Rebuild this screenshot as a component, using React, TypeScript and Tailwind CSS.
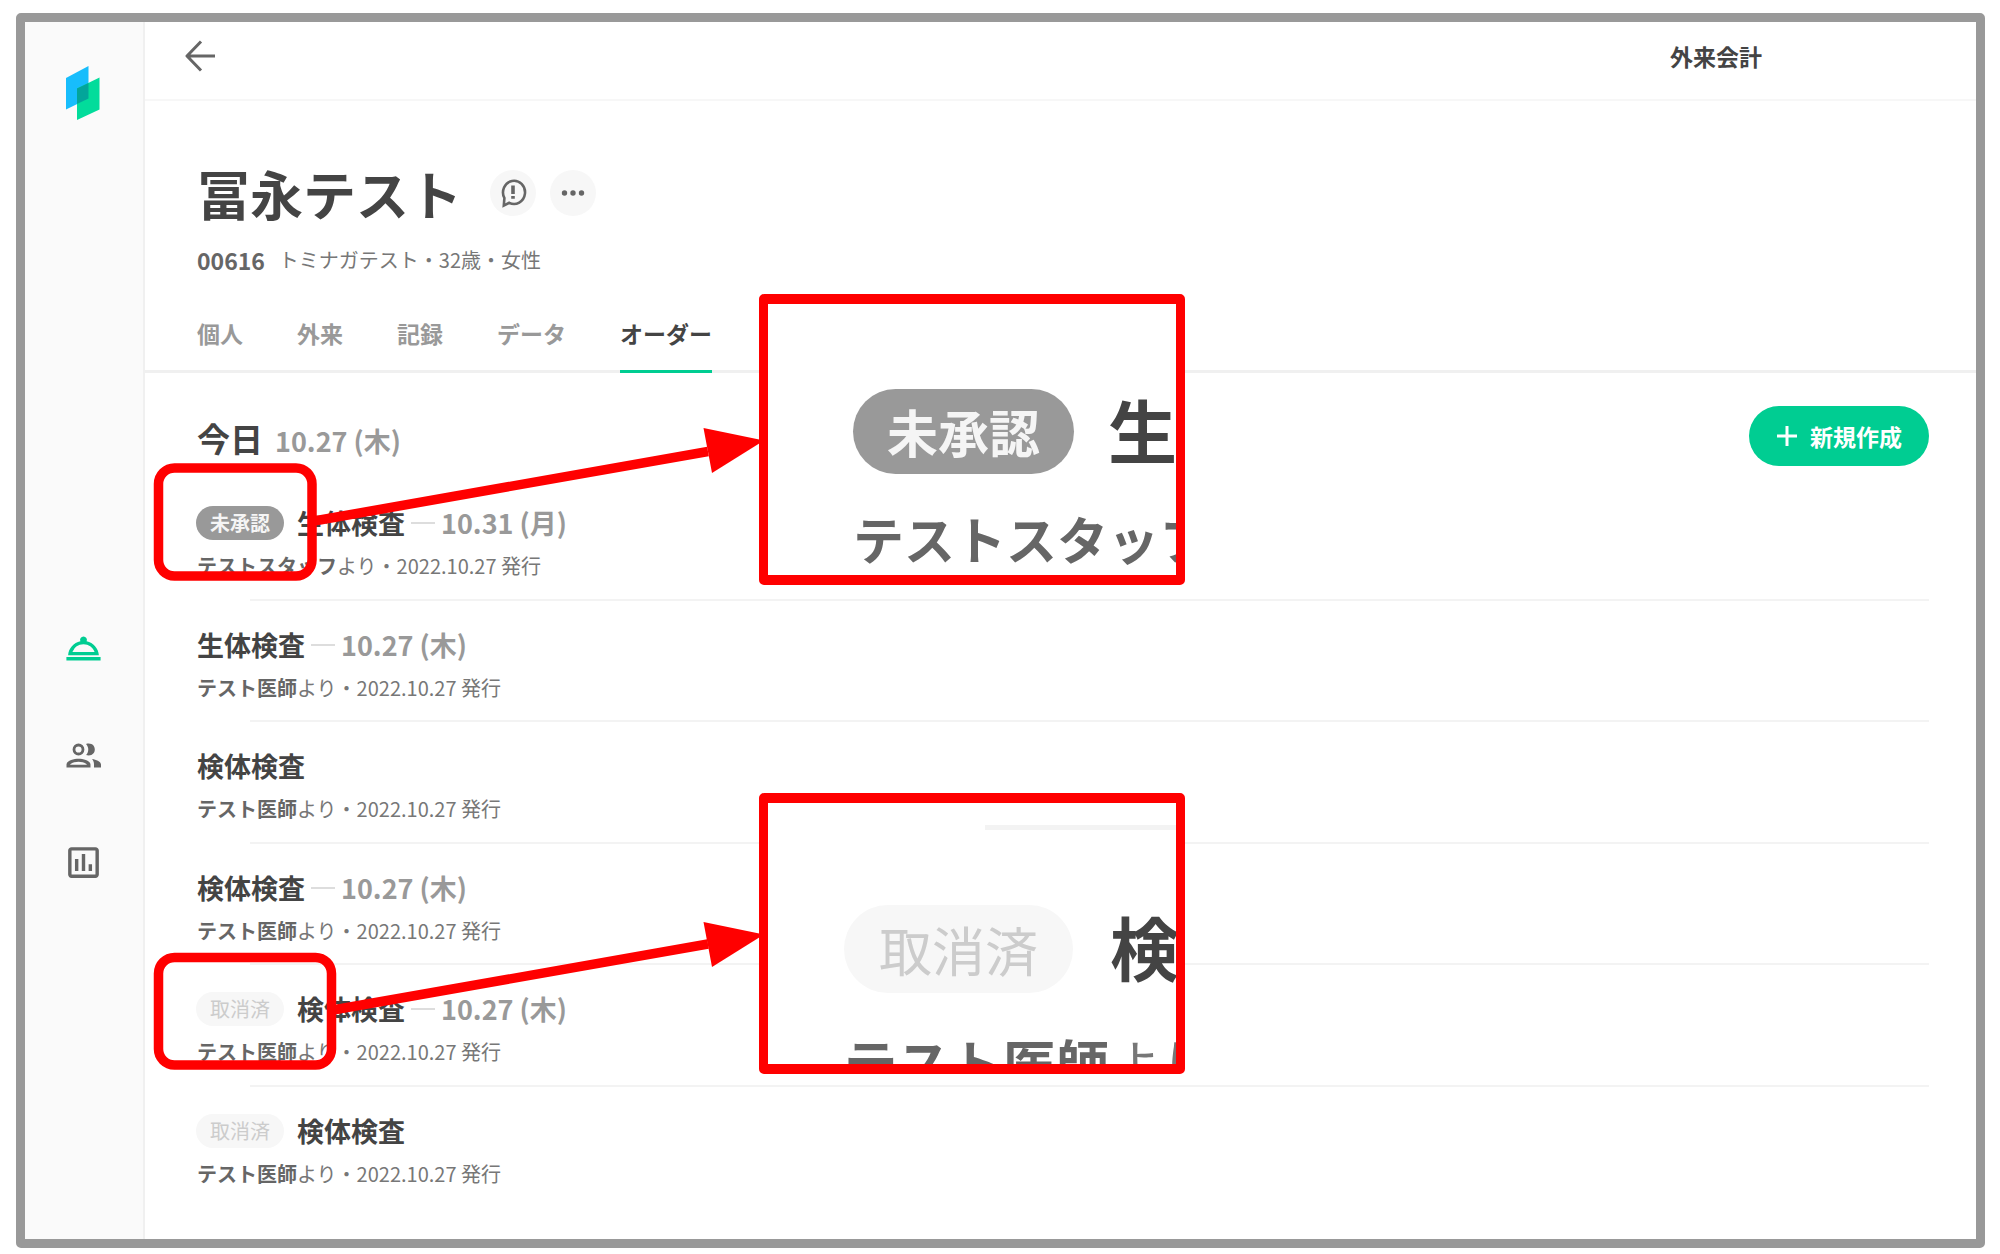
import React from "react";
import { MdOutlineRoomService, MdOutlineAssessment } from "react-icons/md";

type Status = "pending" | "cancelled";

interface Order {
  status?: Status;
  title: string;
  date?: string;
  author: string;
}

const orders: Order[] = [
  { status: "pending", title: "生体検査", date: "10.31 (月)", author: "テストスタッフ" },
  { title: "生体検査", date: "10.27 (木)", author: "テスト医師" },
  { title: "検体検査", author: "テスト医師" },
  { title: "検体検査", date: "10.27 (木)", author: "テスト医師" },
  { status: "cancelled", title: "検体検査", date: "10.27 (木)", author: "テスト医師" },
  { status: "cancelled", title: "検体検査", author: "テスト医師" },
];

const tabs = ["個人", "外来", "記録", "データ", "オーダー"];

function Logo() {
  return (
    <svg width="34" height="54" viewBox="0 0 34 54" aria-hidden="true">
      <path d="M0 12 L22.5 0 V32.5 L0 43.5 Z" fill="#17bdfc" />
      <path d="M11 22.5 L33.5 11.5 V43.5 L11 54 Z" fill="#02dc9b" />
      <path d="M11 22.5 L22.5 17 V32.5 L11 38 Z" fill="#03a59a" />
    </svg>
  );
}

function BackIcon() {
  return (
    <svg width="32" height="32" viewBox="0 0 32 32" fill="none" stroke="#666" strokeWidth="3" aria-hidden="true">
      <path d="M16 1.5 L2 16 L16 30.5 M2 16 H30" strokeLinejoin="round" />
    </svg>
  );
}

function PeopleIcon() {
  return (
    <svg width="41" height="41" viewBox="0 0 41 41" fill="currentColor" aria-hidden="true">
      <circle cx="15.5" cy="14.5" r="4.5" fill="none" stroke="currentColor" strokeWidth="2.8" />
      <path d="M23 8.9 C29 7.4 31.8 11 31.8 14.5 C31.8 18 29 21.6 23 20.1 C26 16.8 26 12.2 23 8.9 Z" />
      <path
        fillRule="evenodd"
        d="M3.5 32.5 V29.5 C3.5 25.5 11 23.7 15.5 23.7 S27.5 25.5 27.5 29.5 V32.5 Z M7 29.7 H24 C23 28 18.5 26.8 15.5 26.8 S8 28 7 29.7 Z"
      />
      <path d="M29 24 C33.5 24.9 38 26.7 38 29.5 V32.5 H31 V29.5 C31 27.2 30.3 25.4 29 24 Z" />
    </svg>
  );
}

function AlertBubbleIcon() {
  return (
    <svg width="28" height="30" viewBox="0 0 28 30" fill="none" stroke="#666" aria-hidden="true">
      <path d="M4.8 27.6 L5.4 20 A11 11.6 0 1 1 10.2 24.8 Z" strokeWidth="2.6" />
      <path d="M14 7.5 V16 M14 18 V20.8" strokeWidth="3.6" />
    </svg>
  );
}

function DotsIcon() {
  return (
    <svg width="24" height="6" viewBox="0 0 24 6" fill="#666" aria-hidden="true">
      <circle cx="3.5" cy="3" r="2.7" />
      <circle cx="12" cy="3" r="2.7" />
      <circle cx="20.5" cy="3" r="2.7" />
    </svg>
  );
}

function PlusIcon() {
  return (
    <svg width="22" height="22" viewBox="0 0 22 22" stroke="#fff" strokeWidth="3" aria-hidden="true">
      <path d="M11 1 V21 M1 11 H21" />
    </svg>
  );
}

function Badge({ status }: { status: Status }) {
  return status === "pending" ? (
    <span className="mr-[13px] -ml-px rounded-full bg-[#999] px-3.5 text-[20px] leading-[34px] font-bold text-[#f5f5f5]">
      未承認
    </span>
  ) : (
    <span className="mr-[13px] -ml-px rounded-full bg-[#f7f7f7] px-3.5 text-[20px] leading-[34px] text-[#ccc]">
      取消済
    </span>
  );
}

function OrderRow({ order }: { order: Order }) {
  return (
    <li className="group flex flex-col">
      <div className="flex h-[88px] items-center">
        {order.status && <Badge status={order.status} />}
        <h3 className="text-[27px] leading-10 font-bold text-[#444]">{order.title}</h3>
        {order.date && (
          <>
            <span className="mx-1.5 h-0.5 w-6 bg-[#ddd]" />
            <span className="text-[27px] leading-10 font-bold text-[#999]">{order.date}</span>
          </>
        )}
      </div>
      <p className="-mt-4 text-[20px] leading-[30px] text-[#777]">
        <b className="font-bold text-[#666]">{order.author}</b>より・2022.10.27 発行
      </p>
      <div className="mt-auto ml-[53px] h-0.5 bg-[#f3f3f3] group-last:hidden" />
    </li>
  );
}

function Annotations() {
  return (
    <>
      <svg className="pointer-events-none absolute top-0 left-0" width="1200" height="1100" viewBox="0 0 1200 1100" fill="none" aria-hidden="true">
        <g stroke="#f00" strokeWidth="9.5">
          <rect x="158.5" y="468" width="153.5" height="108" rx="16" />
          <rect x="158.5" y="957.5" width="173" height="107.5" rx="16" />
          <path d="M314 521 L708 451.5 M333 1010 L708 944" />
        </g>
        <g fill="#f00">
          <path d="M703.5 428 L764 440.5 L712 473 Z" />
          <path d="M703.5 922 L764 934.5 L712 967 Z" />
        </g>
      </svg>

      <div className="absolute top-[294px] left-[759px] h-[291px] w-[426px] overflow-hidden rounded-[5px] border-x-[9px] border-y-[10px] border-[#f00] bg-white pt-[85px] pl-[85px] whitespace-nowrap">
        <div className="flex items-start">
          <span className="mr-[34px] shrink-0 rounded-full bg-[#999] px-[34px] text-[51px] leading-[85px] font-bold text-[#f5f5f5]">
            未承認
          </span>
          <span className="text-[69px] leading-[80px] font-bold text-[#444]">生体検査</span>
        </div>
        <p className="mt-[26px] text-[51px] leading-[76px] font-bold text-[#666]">テストスタッフ</p>
      </div>

      <div className="absolute top-[793px] left-[759px] h-[281px] w-[426px] overflow-hidden rounded-[5px] border-x-[9px] border-y-[10px] border-[#f00] bg-white pt-[22px] pl-[76px] whitespace-nowrap">
        <div className="ml-[141px] h-[5px] bg-[#f3f3f3]" />
        <div className="mt-[75px] flex items-start">
          <span className="mr-[37px] shrink-0 rounded-full bg-[#f7f7f7] px-[35px] text-[53px] leading-[88px] text-[#ccc]">
            取消済
          </span>
          <span className="text-[69px] leading-[82px] font-bold text-[#444]">検体検査</span>
        </div>
        <p className="mt-[29px] text-[53px] leading-[80px] text-[#777]">
          <b className="font-bold text-[#666]">テスト医師</b>より
        </p>
      </div>
    </>
  );
}

export default function App() {
  return (
    <div className="relative flex min-h-screen bg-white pt-[13px] pr-[15px] pb-[6px] pl-4 font-['Noto_Sans_CJK_JP','Noto_Sans',sans-serif]">
      <div className="flex flex-1 rounded-[5px] border-[9px] border-[#999]">
        <aside className="flex w-[120px] shrink-0 flex-col items-center border-r-2 border-[#f0f0f0] bg-[#fafafa] pt-11 pr-0.5">
          <Logo />
          <nav className="mt-[508px] flex flex-col gap-[66px] text-[41px] text-[#666]">
            <a href="#reception" aria-label="受付" className="text-[#00cd92]"><MdOutlineRoomService /></a>
            <a href="#patients" aria-label="患者"><PeopleIcon /></a>
            <a href="#reports" aria-label="統計"><MdOutlineAssessment /></a>
          </nav>
        </aside>

        <main className="flex min-w-0 flex-1 flex-col">
          <header className="flex h-[79px] shrink-0 items-center justify-between border-b-2 border-[#f7f7f7] pr-[214px] pb-[9px] pl-10">
            <button aria-label="戻る"><BackIcon /></button>
            <a href="#accounting" className="text-[23px] leading-8 font-bold text-[#444]">外来会計</a>
          </header>

          <section className="px-[52px] pt-[59px]">
            <div className="flex items-center">
              <h1 className="mr-7 text-[53px] leading-[66px] font-bold text-[#444]">冨永テスト</h1>
              <button aria-label="メモ" className="mr-3.5 flex size-[46px] items-center justify-center rounded-full bg-[#f7f7f7]">
                <AlertBubbleIcon />
              </button>
              <button aria-label="その他" className="flex size-[46px] items-center justify-center rounded-full bg-[#f7f7f7]">
                <DotsIcon />
              </button>
            </div>
            <p className="mt-4 flex items-center text-[20px] leading-9 text-[#777]">
              <span className="mr-3.5 text-[23px] font-bold text-[#666]">00616</span>
              トミナガテスト・32歳・女性
            </p>
          </section>

          <nav className="mt-[37px] flex gap-[54px] border-b-[3px] border-[#f0f0f0] px-[52px]">
            {tabs.map((tab) => (
              <a
                key={tab}
                href="#"
                className={
                  tab === "オーダー"
                    ? "-mb-[3px] border-b-[3px] border-[#00cd92] pb-[19px] text-[23px] leading-9 font-bold text-[#444]"
                    : "pb-[19px] text-[23px] leading-9 font-bold text-[#999]"
                }
              >
                {tab}
              </a>
            ))}
          </nav>

          <div className="flex flex-1 flex-col pt-[33px] pr-[47px] pb-[31px] pl-[52px]">
            <div className="flex items-start justify-between">
              <h2 className="flex items-baseline gap-3 pt-[7px] text-[33px] leading-[50px] font-bold text-[#444]">
                今日
                <span className="text-[27px] text-[#999]">10.27 (木)</span>
              </h2>
              <button className="flex h-[60px] items-center gap-3 rounded-full bg-[#00cd92] px-[27px] text-[23px] leading-8 font-bold text-white">
                <PlusIcon />
                新規作成
              </button>
            </div>
            <ul className="mt-[13px] grid flex-1 auto-rows-fr">
              {orders.map((order, index) => (
                <OrderRow key={index} order={order} />
              ))}
            </ul>
          </div>
        </main>
      </div>
      <Annotations />
    </div>
  );
}
